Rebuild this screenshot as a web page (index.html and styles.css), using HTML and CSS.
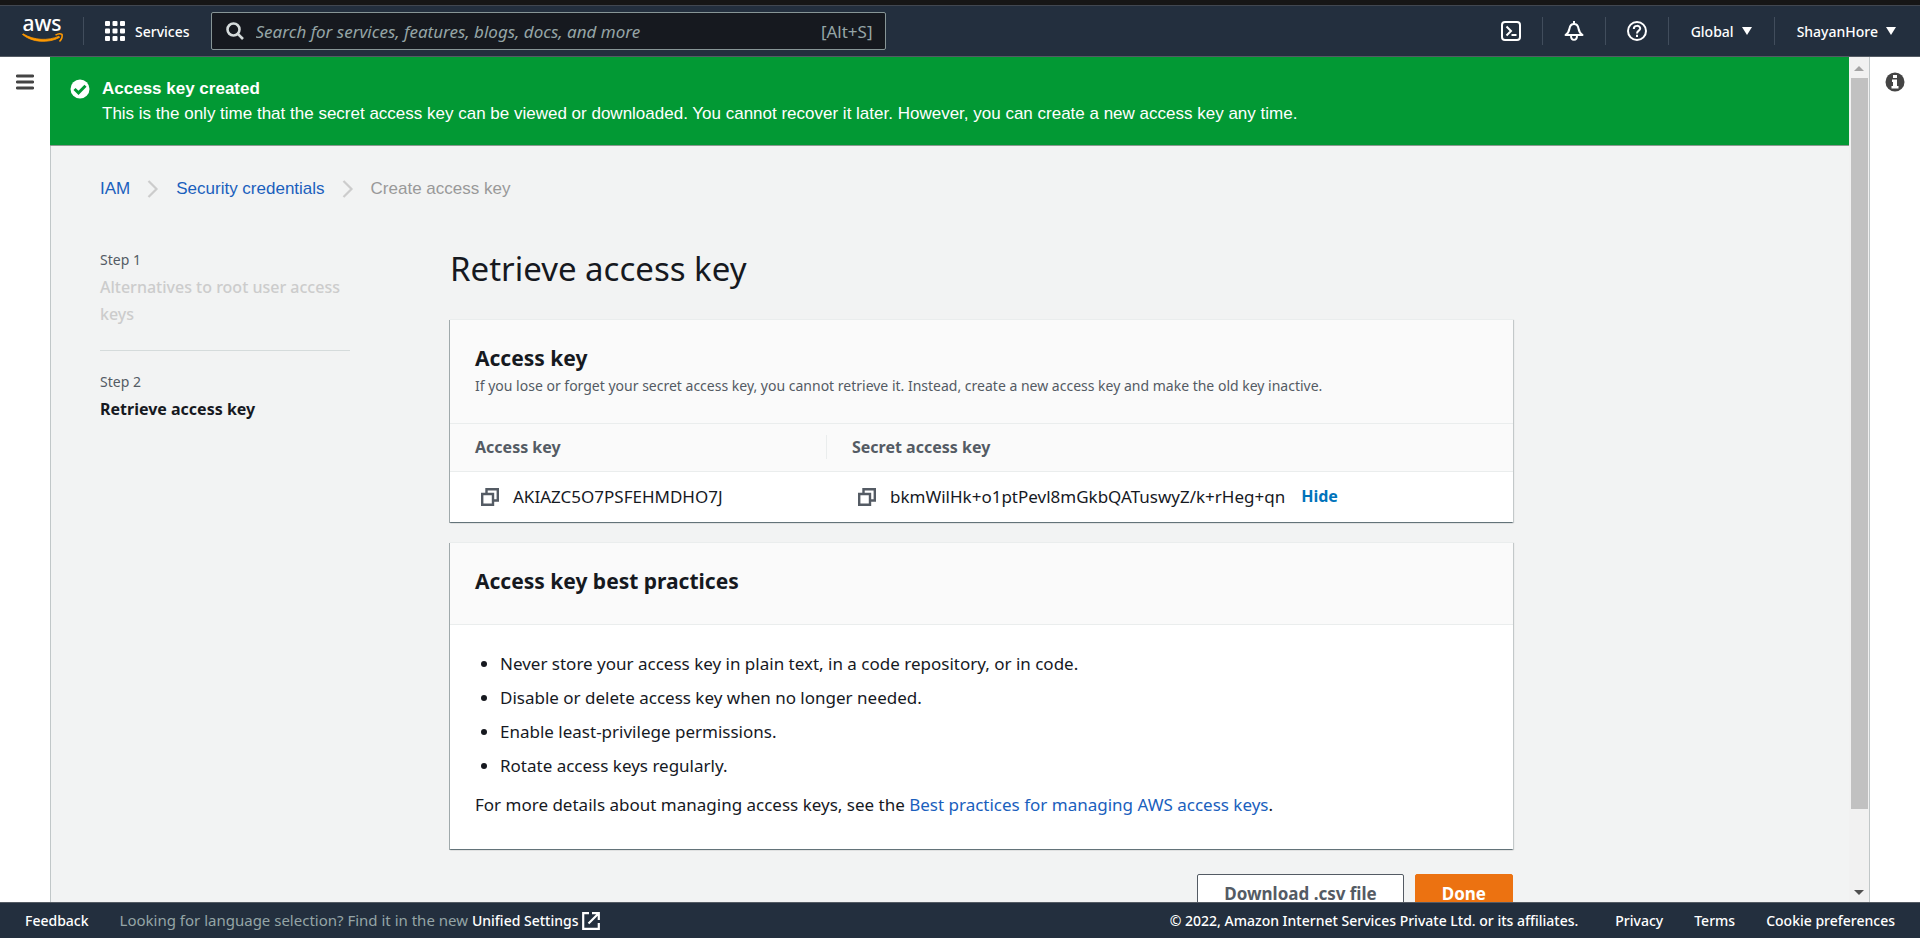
FILE: index.html
```html
<!DOCTYPE html>
<html lang="en">
<head>
<meta charset="utf-8">
<title>Create access key | IAM</title>
<link rel="stylesheet" href="styles.css">
</head>
<body class="app">
<header class="topbar">
  <a class="logo" href="#" aria-label="AWS home">
    <svg width="42" height="46" viewBox="0 -9 42 46">
      <text class="logo-text" x="20" y="14" text-anchor="middle">aws</text>
      <path d="M0.500 17.500C10 25.500 26 26.500 37.500 20.500L37 19.200C26 24 12 23.500 1 16.800Z" fill="#f90" stroke="#f90" stroke-width="0.800"/>
      <path d="M33.500 18.200C36 16.600 39 16.800 40 17.400C40.500 19.500 39.500 22.500 37.500 24.500" fill="none" stroke="#f90" stroke-width="1.600"/>
    </svg>
  </a>
  <span class="divider"></span>
  <button class="nav-button services" type="button">
    <svg width="20" height="20" viewBox="0 0 20 20" fill="#fff">
      <rect width="5" height="5" rx="1"/><rect x="7.500" width="5" height="5" rx="1"/><rect x="15" width="5" height="5" rx="1"/>
      <rect y="7.500" width="5" height="5" rx="1"/><rect x="7.500" y="7.500" width="5" height="5" rx="1"/><rect x="15" y="7.500" width="5" height="5" rx="1"/>
      <rect y="15" width="5" height="5" rx="1"/><rect x="7.500" y="15" width="5" height="5" rx="1"/><rect x="15" y="15" width="5" height="5" rx="1"/>
    </svg>
    <span>Services</span>
  </button>
  <label class="search">
    <svg width="18" height="18" viewBox="0 0 18 18" fill="none" stroke="#d5dbdb" stroke-width="2.600"><circle cx="7.500" cy="7.500" r="6"/><path d="M11.800 11.800L17 17"/></svg>
    <input class="search-input" type="text" aria-label="Search" placeholder="Search for services, features, blogs, docs, and more">
    <span class="search-hint">[Alt+S]</span>
  </label>
  <nav class="topnav" aria-label="Account">
    <button class="nav-button nav-icon" type="button" aria-label="CloudShell">
      <svg width="20" height="20" viewBox="0 0 20 20" fill="none" stroke="#fff" stroke-width="2"><rect x="1" y="1" width="18" height="18" rx="3"/><path d="M5.500 5.500L10 10L5.500 14.500M10.500 14H15.500"/></svg>
    </button>
    <span class="divider"></span>
    <button class="nav-button nav-icon" type="button" aria-label="Notifications">
      <svg width="20" height="20" viewBox="0 0 20 20" fill="none" stroke="#fff" stroke-width="2"><path d="M10 0V3M1.500 14H18.500C15.500 12 15 10.500 14.500 7.500C14 4.500 12.500 3 10 3C7.500 3 6 4.500 5.500 7.500C5 10.500 4.500 12 1.500 14Z" stroke-linejoin="round"/><path d="M7 14.500C7 20.300 13 20.300 13 14.500"/></svg>
    </button>
    <span class="divider"></span>
    <button class="nav-button nav-icon" type="button" aria-label="Help">
      <svg width="20" height="20" viewBox="0 0 20 20" fill="none" stroke="#fff" stroke-width="2"><circle cx="10" cy="10" r="9"/><path d="M6.800 8C6.800 3.800 13.200 4 13.200 7.600C13.200 9.800 10 9.600 10 12.400M10 13.800V16"/></svg>
    </button>
    <span class="divider"></span>
    <button class="nav-button nav-menu" type="button"><span>Global</span><span class="caret"></span></button>
    <span class="divider"></span>
    <button class="nav-button nav-menu" type="button"><span>ShayanHore</span><span class="caret"></span></button>
  </nav>
</header>

<div class="workspace">
  <aside class="rail rail-left">
    <button class="rail-button" type="button" aria-label="Open navigation">
      <svg width="18" height="20" viewBox="0 -1 18 20" stroke="#444" stroke-width="2.800" stroke-linecap="round"><path d="M1.200 3H16.800M1.200 9H16.800M1.200 15H16.800"/></svg>
    </button>
  </aside>

  <div class="scroller">
    <div class="page">
      <div class="flash" role="status">
        <svg class="flash-icon" width="20" height="20" viewBox="0 0 20 20"><circle cx="10" cy="10" r="9.500" fill="#fff"/><path d="M4.500 10L8.500 13.800L15.500 6.800" fill="none" stroke="#029934" stroke-width="3"/></svg>
        <div>
          <div class="flash-title">Access key created</div>
          <div>This is the only time that the secret access key can be viewed or downloaded. You cannot recover it later. However, you can create a new access key any time.</div>
        </div>
      </div>

      <div class="page-body">
        <nav class="breadcrumbs" aria-label="Breadcrumbs">
          <a class="link" href="#">IAM</a>
          <svg width="12" height="18" viewBox="0 0 12 18" fill="none" stroke="#ccc" stroke-width="2.200"><path d="M1.500 1L9.500 9L1.500 17"/></svg>
          <a class="link" href="#">Security credentials</a>
          <svg width="12" height="18" viewBox="0 0 12 18" fill="none" stroke="#ccc" stroke-width="2.200"><path d="M1.500 1L9.500 9L1.500 17"/></svg>
          <span>Create access key</span>
        </nav>

        <div class="wizard">
          <ol class="steps">
            <li class="step"><div class="step-label">Step 1</div><div class="step-name step-disabled">Alternatives to root user access keys</div></li>
            <li class="step"><div class="step-label">Step 2</div><div class="step-name step-current">Retrieve access key</div></li>
          </ol>
          <main class="content">
            <h1 class="title">Retrieve access key</h1>

            <section class="card">
              <div class="card-header card-header-keys">
                <h2 class="card-title">Access key</h2>
                <p class="card-description">If you lose or forget your secret access key, you cannot retrieve it. Instead, create a new access key and make the old key inactive.</p>
              </div>
              <table class="keys">
                <thead>
                  <tr><th class="key-column"><div class="head-cell head-cell-divided">Access key</div></th><th><div class="head-cell">Secret access key</div></th></tr>
                </thead>
                <tbody>
                  <tr>
                    <td><div class="key">
                      <button class="copy" type="button" aria-label="Copy access key"><svg width="18" height="18" viewBox="0 0 18 18" fill="none" stroke="#545b64" stroke-width="2.400"><path d="M1.200 6H12V16.800H1.200ZM5.500 6V1.200H16.800V12.500H12"/></svg></button>
                      <span>AKIAZC5O7PSFEHMDHO7J</span>
                    </div></td>
                    <td><div class="key">
                      <button class="copy" type="button" aria-label="Copy secret access key"><svg width="18" height="18" viewBox="0 0 18 18" fill="none" stroke="#545b64" stroke-width="2.400"><path d="M1.200 6H12V16.800H1.200ZM5.500 6V1.200H16.800V12.500H12"/></svg></button>
                      <span>bkmWilHk+o1ptPevl8mGkbQATuswyZ/k+rHeg+qn</span>
                      <button class="hide" type="button">Hide</button>
                    </div></td>
                  </tr>
                </tbody>
              </table>
            </section>

            <section class="card">
              <div class="card-header">
                <h2 class="card-title">Access key best practices</h2>
              </div>
              <div class="card-body">
                <ul class="practices">
                  <li>Never store your access key in plain text, in a code repository, or in code.</li>
                  <li>Disable or delete access key when no longer needed.</li>
                  <li>Enable least-privilege permissions.</li>
                  <li>Rotate access keys regularly.</li>
                </ul>
                <p class="more">For more details about managing access keys, see the <a class="link" href="#">Best practices for managing AWS access keys</a>.</p>
              </div>
            </section>

            <div class="actions">
              <button class="button" type="button">Download .csv file</button>
              <button class="button button-primary" type="button">Done</button>
            </div>
          </main>
        </div>
      </div>
    </div>
    <div class="scrollbar" aria-hidden="true">
      <span class="scroll-arrow scroll-up"></span>
      <span class="scroll-track"><span class="scroll-thumb"></span></span>
      <span class="scroll-arrow scroll-down"></span>
    </div>
  </div>

  <aside class="rail rail-right">
    <button class="rail-button" type="button" aria-label="Open help">
      <svg width="20" height="20" viewBox="0 0 20 20"><circle cx="10" cy="10" r="9.500" fill="#444"/><path d="M8 3H12V6H8ZM7 7.500H12V14H13.500V16.500H6.500V14H8V10H7Z" fill="#fff"/></svg>
    </button>
  </aside>
</div>

<footer class="footer">
  <a class="footer-link" href="#">Feedback</a>
  <div class="language"><span class="language-hint">Looking for language selection? Find it in the new</span>
    <a class="footer-link unified" href="#">Unified Settings<svg width="18" height="18" viewBox="0 0 18 18" fill="none" stroke="#fff" stroke-width="2.200"><path d="M7 1.200H1.200V16.800H16.800V11M10 1.200H16.800V8M16.500 1.500L6.500 11.500"/></svg></a>
  </div>
  <div class="legal">
    <span class="copyright">© 2022, Amazon Internet Services Private Ltd. or its affiliates.</span>
    <a class="footer-link" href="#">Privacy</a>
    <a class="footer-link" href="#">Terms</a>
    <a class="footer-link" href="#">Cookie preferences</a>
  </div>
</footer>
</body>
</html>
```
FILE: styles.css
```css
* { box-sizing: border-box; }

.app {
  margin: 0;
  height: 100vh;
  display: flex;
  flex-direction: column;
  overflow: hidden;
  border-top: 5px solid #161616;
  background: #fff;
  color: #16191f;
  font-family: "Noto Sans", "Open Sans", sans-serif;
  font-size: 17px;
  line-height: 27px;
}

button { font: inherit; color: inherit; background: none; border: 0; padding: 0; }
h1, h2, p, ul, ol { margin: 0; padding: 0; }
svg { display: block; flex: none; }

/* Top bar */
.topbar {
  flex: none;
  display: flex;
  align-items: center;
  height: 52px;
  padding: 0 24px 0 22px;
  border-top: 1px solid #414750;
  border-bottom: 1px solid #545b64;
  background: #232f3e;
  color: #fff;
  font-size: 14px;
  font-weight: 500;
}
.logo-text { font-size: 21px; font-weight: 500; fill: #fff; }
.divider { width: 1px; height: 28px; background: #414d5c; }
.logo + .divider { margin-left: 19px; }
.nav-button { display: flex; align-items: center; }
.services { margin-left: 21px; gap: 10px; }
.search {
  display: flex;
  align-items: center;
  width: 675px;
  height: 38px;
  margin-left: 21px;
  padding: 0 12px 0 14px;
  border: 1px solid #879596;
  border-radius: 2px;
  background: #16191f;
  color: #95a5a6;
  font-size: 17px;
  font-weight: 400;
}
.search-input {
  flex: 1;
  min-width: 0;
  margin-left: 12px;
  padding: 0;
  border: 0;
  outline: 0;
  background: none;
  color: #fff;
  font: inherit;
  font-style: italic;
}
.search-input::placeholder { color: #95a5a6; opacity: 1; }
.search-hint { font-size: 17px; }
.topnav { display: flex; align-items: center; margin-left: auto; }
.nav-icon { padding: 0 21px; }
.nav-menu { gap: 8px; padding: 0 22px; }
.nav-menu:last-child { padding-right: 0; }
.caret { border: 5px solid transparent; border-top: 8px solid #fff; border-bottom: 0; }

/* Workspace */
.workspace { flex: 1; min-height: 0; display: flex; }
.rail { flex: none; padding-top: 15px; }
.rail-left { width: 50px; }
.rail-right { width: 51px; border-left: 1px solid #c1c7c8; }
.rail-button { display: flex; justify-content: center; width: 100%; }
.scroller { flex: 1; min-width: 0; display: flex; }
.page { flex: 1; min-width: 0; display: flex; flex-direction: column; overflow: hidden; }
.page-body { flex: 1 0 auto; border-left: 1px solid #c1c7c8; background: #f2f3f3; }

.flash {
  flex: none;
  display: flex;
  gap: 12px;
  padding: 19px 20px 19px;
  border-bottom: 1px solid #8a9a90;
  background: #029934;
  color: #fff;
  font-family: "Liberation Sans", Arial, sans-serif;
  font-size: 17px;
  line-height: 25px;
}
.flash-icon { margin-top: 3px; }
.flash-title { font-weight: 700; }

.link { color: #1a60bd; text-decoration: none; }
.breadcrumbs {
  display: flex;
  align-items: center;
  gap: 17px;
  padding: 29px 49px 0;
  color: #999;
  font-family: "Liberation Sans", Arial, sans-serif;
  font-size: 17px;
}

.wizard {
  display: grid;
  grid-template-columns: 250px minmax(0, 1fr);
  column-gap: 100px;
  max-width: 1511px;
  padding: 44px 49px 0;
}
.steps { list-style: none; font-size: 16px; }
.step + .step { margin-top: 22px; padding-top: 17px; border-top: 1px solid #d5dbdb; }
.step-label { margin-bottom: 1px; color: #545b64; font-size: 14px; }
.step-name { font-weight: 500; }
.step-disabled { color: #ccc; }
.step-current { font-weight: 700; }

.title { font-size: 33px; font-weight: 400; line-height: 45px; }
.content .title { margin-bottom: 28px; }

.card {
  margin-bottom: 20px;
  border-top: 1px solid #eaeded;
  background: #fff;
  box-shadow: 0 1px 1px #001c244d, 1px 1px 1px #001c2426, -1px 1px 0 #001c244d;
}
.card-header { padding: 24px 25px 29px; border-bottom: 1px solid #eaeded; background: #fafafa; }
.card-header-keys { padding-bottom: 24px; }
.card-title { font-size: 21px; font-weight: 700; line-height: 28px; }
.card-description { color: #545b64; font-size: 14px; }

.keys { width: 100%; border-collapse: collapse; }
.keys th, .keys td { padding: 0 25px; text-align: left; }
.keys th { height: 47px; border-bottom: 1px solid #eaeded; background: #fafafa; color: #545b64; font-size: 16px; font-weight: 700; }
.keys td { height: 51px; }
.keys .key-column { width: 377px; padding-right: 0; }
.head-cell { line-height: 24px; }
.head-cell-divided { border-right: 1px solid #eaeded; }
.key { display: flex; align-items: center; padding-left: 6px; }
.copy { margin-right: 14px; }
.hide { margin-left: 16px; color: #0073bb; font-size: 16px; font-weight: 700; }

.card-body { padding: 25px; }
.practices { padding-left: 25px; }
.practices li { margin-bottom: 7px; }
.more { padding: 5px 0 6px; }

.actions { display: flex; justify-content: flex-end; gap: 11px; padding-top: 5px; }
.button {
  height: 38px;
  padding: 0 26px;
  border: 1px solid #545b64;
  border-radius: 2px;
  background: #fff;
  color: #545b64;
  font-weight: 700;
}
.button-primary { border-color: #ec7211; background: #ec7211; color: #fff; }

.scrollbar { flex: none; display: flex; flex-direction: column; align-items: center; width: 20px; background: #f1f1f1; }
.scroll-arrow { width: 0; margin: 9px 0 7px; border: 5px solid transparent; }
.scroll-up { border-top: 0; border-bottom-color: #a3a3a3; }
.scroll-down { border-bottom: 0; border-top-color: #505050; }
.scroll-track { flex: 1; align-self: stretch; padding: 0 1px 0 2px; }
.scroll-thumb { display: block; height: 91%; background: #c1c1c1; }

/* Footer */
.footer {
  flex: none;
  display: flex;
  align-items: center;
  height: 36px;
  padding: 0 25px;
  border-top: 1px solid #545b64;
  background: #232f3e;
  color: #fff;
  font-size: 14px;
  font-weight: 500;
}
.footer-link { color: #fff; text-decoration: none; }
.language { display: flex; gap: 4px; margin-left: 31px; }
.language-hint { color: #95a5a6; font-size: 15px; font-weight: 400; }
.unified { display: flex; align-items: center; gap: 3px; }
.legal { display: flex; gap: 31px; margin-left: auto; }
.copyright { margin-right: 6px; }
```
